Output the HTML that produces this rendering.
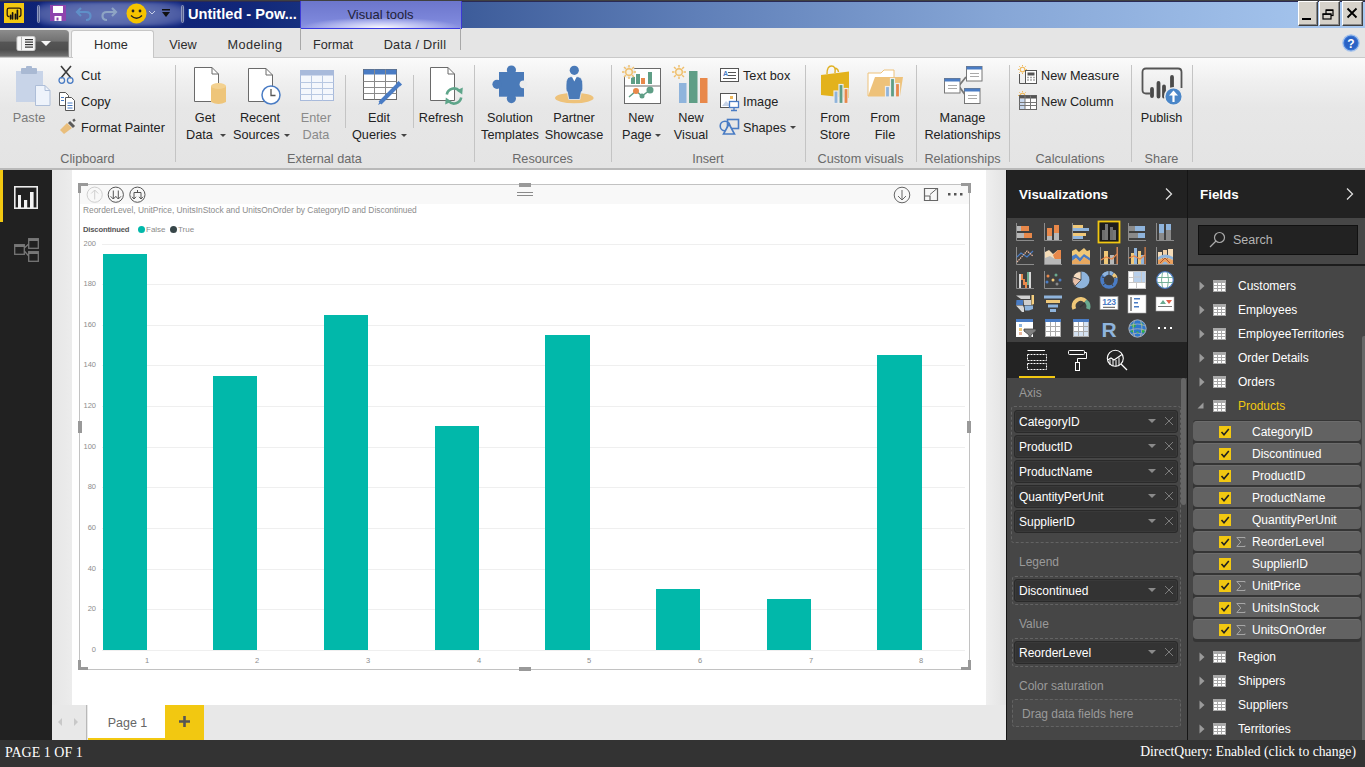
<!DOCTYPE html>
<html><head><meta charset="utf-8">
<style>
*{margin:0;padding:0;box-sizing:border-box}
html,body{width:1365px;height:767px;overflow:hidden;background:#e8e8e8;font-family:"Liberation Sans",sans-serif;position:relative}
.a{position:absolute}
.t{position:absolute;white-space:nowrap;line-height:1}
svg{position:absolute;overflow:visible}
</style></head><body>
<!-- TITLE BAR -->
<div class="a" style="left:0;top:0;width:1365px;height:28px;background:linear-gradient(90deg,#0d2275 0%,#112679 18%,#16307e 22%,#3d5c9a 33.8%,#5f7fb8 51%,#86a6d6 73%,#a8c8f0 100%)"></div>
<div class="a" style="left:0;top:0;width:1365px;height:1px;background:#404040"></div>
<div class="a" style="left:0;top:1px;width:1365px;height:1px;background:#2a2a55"></div>
<!-- app icon -->
<div class="a" style="left:4px;top:3px;width:20px;height:20px;background:#f2c811"></div>
<svg style="left:4px;top:3px" width="20" height="20"><path d="M5.5 13.6 H5 Q3.2 13.6 3.2 11.6 V7 Q3.2 5.2 5 5.2 H15 Q16.9 5.2 16.9 7 V11.6 Q16.9 13.6 15 13.6 H14.8" fill="none" stroke="#2a1a10" stroke-width="1.3"/><path d="M6.6 12.3 V15.8 M8.6 9.8 V15.8 M11.4 11.3 V15.8 M13.4 7.3 V15.8" stroke="#111" stroke-width="1.7" stroke-linecap="round"/><path d="M10 11 V16" stroke="#a08040" stroke-width="1"/></svg>
<!-- qat glow -->
<div class="a" style="left:38px;top:2px;width:146px;height:24px;border-radius:8px;background:radial-gradient(ellipse 60% 70% at 50% 50%,#6676b4 0%,#5a6aac 55%,#4a5aa2 80%,rgba(40,60,150,0.6) 100%);filter:blur(1.5px)"></div>
<div class="a" style="left:37px;top:5px;width:3px;height:18px;border-radius:2px;background:#56628f;border:1px solid #8c97bf"></div>
<div class="a" style="left:181px;top:5px;width:3px;height:18px;border-radius:2px;background:#56628f;border:1px solid #8c97bf"></div>
<!-- save -->
<svg style="left:50px;top:5px" width="16" height="16"><rect x="0" y="0" width="16" height="16" fill="#9b59b6"/><rect x="0" y="0" width="16" height="16" fill="#8e44ad"/><rect x="3" y="1" width="10" height="7" fill="#fff"/><rect x="4.5" y="11" width="7" height="5" fill="#fff"/><rect x="6.5" y="12.5" width="2" height="3" fill="#8e44ad"/></svg>
<!-- undo -->
<svg style="left:75px;top:5px" width="18" height="16"><path d="M6 3 L2 7 L6 11 M2.5 7 H11 Q15.5 7 15.5 11 Q15.5 15 11 15" fill="none" stroke="#5f8fc8" stroke-width="2.2"/></svg>
<!-- redo -->
<svg style="left:100px;top:5px" width="18" height="16"><path d="M12 3 L16 7 L12 11 M15.5 7 H7 Q2.5 7 2.5 11 Q2.5 15 7 15" fill="none" stroke="#8ea4c4" stroke-width="2.2"/></svg>
<!-- smiley -->
<svg style="left:126px;top:3px" width="21" height="21"><circle cx="10.5" cy="10.5" r="10" fill="#f5c400"/><circle cx="7" cy="8" r="1.4" fill="#222"/><circle cx="14" cy="8" r="1.4" fill="#222"/><path d="M5 12.5 Q10.5 18 16 12.5" fill="none" stroke="#222" stroke-width="1.3"/></svg>
<svg style="left:149px;top:11px" width="6" height="4"><path d="M0 0 L3 3 L6 0" fill="none" stroke="#c8d0e8" stroke-width="1"/></svg>
<svg style="left:162px;top:9px" width="8" height="9"><rect x="0" y="0" width="8" height="1.5" fill="#111"/><path d="M0 3 H8 L4 8 Z" fill="#111"/></svg>
<div class="t" style="left:188px;top:7px;font-size:14.6px;font-weight:bold;color:#fff">Untitled - Pow...</div>
<!-- visual tools -->
<div class="a" style="left:300px;top:1px;width:162px;height:28px;border:1px solid #3c3ad6;border-top:none;background:radial-gradient(ellipse 50% 40% at 50% 100%,#fafaff 0%,#c4c8f4 45%,rgba(130,138,222,0) 100%),linear-gradient(#6c76cc,#7c86da 70%,#8a92e2)"></div>
<div class="t" style="left:300px;top:8px;width:161px;text-align:center;font-size:13px;color:#222238">Visual tools</div>
<!-- window buttons -->
<div class="a" style="left:1298px;top:1px;width:20px;height:25px;background:#d6d2ca;border-top:1px solid #fff;border-left:1px solid #fff;border-right:1px solid #404040;border-bottom:1px solid #404040;box-shadow:inset -1px -1px 0 #8a8a8a"></div>
<div class="a" style="left:1319px;top:1px;width:21px;height:25px;background:#d6d2ca;border-top:1px solid #fff;border-left:1px solid #fff;border-right:1px solid #404040;border-bottom:1px solid #404040;box-shadow:inset -1px -1px 0 #8a8a8a"></div>
<div class="a" style="left:1342px;top:1px;width:21px;height:25px;background:#d6d2ca;border-top:1px solid #fff;border-left:1px solid #fff;border-right:1px solid #404040;border-bottom:1px solid #404040;box-shadow:inset -1px -1px 0 #8a8a8a"></div>
<div class="a" style="left:1302px;top:18px;width:9px;height:2px;background:#000"></div>
<svg style="left:1322px;top:9px" width="13" height="12"><rect x="4" y="1" width="7" height="5.5" fill="none" stroke="#000" stroke-width="1.2"/><rect x="4" y="0.6" width="7" height="1.4" fill="#000"/><rect x="1" y="5" width="8" height="5" fill="#d6d2ca" stroke="#000" stroke-width="1.2"/><rect x="0.6" y="4.5" width="8.8" height="1.4" fill="#000"/></svg>
<svg style="left:1346px;top:7px" width="12" height="12"><path d="M1.5 1.5 L10.5 10.5 M10.5 1.5 L1.5 10.5" stroke="#000" stroke-width="1.8"/></svg>

<!-- TAB ROW -->
<div class="a" style="left:0;top:28px;width:1365px;height:30px;background:#e5e5e5"></div>
<div class="a" style="left:300px;top:28px;width:162px;height:1px;background:#3a3ae0"></div>
<div class="a" style="left:0;top:30px;width:69px;height:27px;border-radius:0 4px 0 0;border:1px solid #8a8a8a;border-left:none;background:linear-gradient(#8a8a8a 0%,#727272 40%,#555 45%,#4e4e4e 75%,#707070 100%)"></div>
<svg style="left:16px;top:36px" width="36" height="15"><rect x="1" y="0.5" width="18" height="14" rx="1.5" fill="#f6f6f6" stroke="#d0d0d0"/><rect x="5" y="0.5" width="1" height="14" fill="#b8b8b8"/><rect x="9" y="3" width="8" height="1.2" fill="#333"/><rect x="9" y="5.5" width="8" height="1.2" fill="#333"/><rect x="9" y="8" width="8" height="1.2" fill="#333"/><rect x="9" y="10.5" width="8" height="1.2" fill="#333"/><path d="M25 5 H35 L30 10 Z" fill="#f6f6f6"/></svg>
<div class="a" style="left:71px;top:30px;width:83px;height:29px;background:#fafafa;border:1px solid #c6c6c6;border-bottom:none;border-radius:3px 3px 0 0"></div>
<div class="t" style="left:70px;top:39px;width:82px;text-align:center;font-size:12.7px;color:#2c2c2c">Home</div>
<div class="t" style="left:160px;top:39px;width:46px;text-align:center;font-size:12.7px;color:#2c2c2c">View</div>
<div class="t" style="left:215px;top:39px;width:80px;text-align:center;font-size:12.7px;letter-spacing:0.44px;color:#2c2c2c">Modeling</div>
<div class="t" style="left:300px;top:39px;width:66px;text-align:center;font-size:12.7px;color:#2c2c2c">Format</div>
<div class="t" style="left:370px;top:39px;width:90px;text-align:center;font-size:12.7px;letter-spacing:0.29px;color:#2c2c2c">Data / Drill</div>
<div class="a" style="left:300px;top:28px;width:1px;height:22px;background:#a8a8a8"></div>
<div class="a" style="left:460px;top:28px;width:1px;height:22px;background:#a8a8a8"></div>
<svg style="left:1342px;top:34px" width="18" height="18"><circle cx="9" cy="9" r="8.2" fill="#3a78d8" stroke="#a8c4ec" stroke-width="1.2"/><circle cx="9" cy="9" r="6.5" fill="#2b62c4"/><text x="9" y="13.5" font-family="Liberation Sans" font-weight="bold" font-size="12" fill="#fff" text-anchor="middle">?</text></svg>
<!-- RIBBON -->
<div class="a" style="left:0;top:57px;width:1365px;height:113px;background:linear-gradient(#fbfbfb 0%,#efefef 22%,#e7e7e7 45%,#e4e4e4 100%);border-top:1px solid #c9c9c9;border-bottom:2px solid #b9b9b9"></div>
<div class="a" style="left:73px;top:57px;width:80px;height:2px;background:#f9f9f9"></div>
<!-- separators -->
<div class="a" style="left:175px;top:65px;width:1px;height:97px;background:#c4c4c4"></div>
<div class="a" style="left:474px;top:65px;width:1px;height:97px;background:#c4c4c4"></div>
<div class="a" style="left:611px;top:65px;width:1px;height:97px;background:#c4c4c4"></div>
<div class="a" style="left:805px;top:65px;width:1px;height:97px;background:#c4c4c4"></div>
<div class="a" style="left:916px;top:65px;width:1px;height:97px;background:#c4c4c4"></div>
<div class="a" style="left:1009px;top:65px;width:1px;height:97px;background:#c4c4c4"></div>
<div class="a" style="left:1131px;top:65px;width:1px;height:97px;background:#c4c4c4"></div>
<div class="a" style="left:1192px;top:65px;width:1px;height:97px;background:#c4c4c4"></div>
<div class="a" style="left:345px;top:75px;width:1px;height:53px;background:#c4c4c4"></div>
<div class="a" style="left:413px;top:75px;width:1px;height:53px;background:#c4c4c4"></div>

<!-- group labels -->
<div class="t" style="left:0;top:153px;width:175px;text-align:center;font-size:12.7px;color:#6a6a6a">Clipboard</div>
<div class="t" style="left:175px;top:153px;width:299px;text-align:center;font-size:12.7px;color:#6a6a6a">External data</div>
<div class="t" style="left:474px;top:153px;width:137px;text-align:center;font-size:12.7px;color:#6a6a6a">Resources</div>
<div class="t" style="left:611px;top:153px;width:194px;text-align:center;font-size:12.7px;color:#6a6a6a">Insert</div>
<div class="t" style="left:805px;top:153px;width:111px;text-align:center;font-size:12.7px;color:#6a6a6a">Custom visuals</div>
<div class="t" style="left:916px;top:153px;width:93px;text-align:center;font-size:12.7px;color:#6a6a6a">Relationships</div>
<div class="t" style="left:1009px;top:153px;width:122px;text-align:center;font-size:12.7px;color:#6a6a6a">Calculations</div>
<div class="t" style="left:1131px;top:153px;width:61px;text-align:center;font-size:12.7px;color:#6a6a6a">Share</div>

<!-- Clipboard -->
<svg style="left:15px;top:66px" width="36" height="40">
 <rect x="1" y="5" width="27" height="31" fill="#c8d4e8"/>
 <rect x="6" y="2" width="16" height="6" rx="1" fill="#a9b9d3"/>
 <rect x="11" y="0" width="6" height="4" rx="1" fill="#a9b9d3"/>
 <path d="M20.5 19.5 H30 L35 24.5 V39.5 H20.5 Z" fill="#eef3fb" stroke="#aebed8"/>
 <path d="M30 19.5 V24.5 H35" fill="none" stroke="#aebed8"/>
</svg>
<div class="t" style="left:0;top:112px;width:58px;text-align:center;font-size:12.7px;color:#7a7a7a">Paste</div>
<svg style="left:58px;top:66px" width="18" height="19">
 <path d="M3 0 L13 12 M13 0 L3 12" stroke="#3c3c3c" stroke-width="1.6"/>
 <circle cx="3.8" cy="14.5" r="2.8" fill="none" stroke="#4a7cc4" stroke-width="1.3"/>
 <circle cx="12.2" cy="14.5" r="2.8" fill="none" stroke="#4a7cc4" stroke-width="1.3"/>
</svg>
<div class="t" style="left:81px;top:70px;font-size:12.7px;color:#222">Cut</div>
<svg style="left:58px;top:92px" width="19" height="19">
 <path d="M1.5 0.5 H7.5 L10.5 3.5 V13.5 H1.5 Z" fill="#fff" stroke="#555"/>
 <path d="M7.5 5.5 H13.5 L16.5 8.5 V18.5 H7.5 Z" fill="#fff" stroke="#555"/>
 <path d="M3 5.5 H6 M3 8.5 H6 M9.5 11 H14.5 M9.5 13.5 H14.5 M9.5 16 H14.5" stroke="#4a7cc4" stroke-width="1"/>
</svg>
<div class="t" style="left:81px;top:96px;font-size:12.7px;color:#222">Copy</div>
<svg style="left:59px;top:119px" width="18" height="16">
 <path d="M10 3 L15 8" stroke="#5a5a5a" stroke-width="3"/>
 <path d="M14 2 L16 0.5" stroke="#5a5a5a" stroke-width="2.5"/>
 <path d="M1 11 L8 4 L13 9 L5 15 Z" fill="#e9be7c"/>
</svg>
<div class="t" style="left:81px;top:122px;font-size:12.7px;color:#222">Format Painter</div>

<!-- External data -->
<svg style="left:193px;top:66px" width="36" height="40">
 <path d="M1.5 1.5 H19 L25.5 8 V35.5 H1.5 Z" fill="#fff" stroke="#6a6a6a"/>
 <path d="M19 1.5 V8 H25.5" fill="none" stroke="#6a6a6a"/>
 <path d="M18 20 V36 Q25.5 40 33 36 V20 Z" fill="#eec57a"/>
 <ellipse cx="25.5" cy="20" rx="7.5" ry="3" fill="#f3d190"/>
</svg>
<div class="t" style="left:175px;top:112px;width:60px;text-align:center;font-size:12.7px;color:#222">Get</div>
<div class="t" style="left:186px;top:129px;font-size:12.7px;color:#222">Data</div>
<svg style="left:220px;top:134px" width="6" height="4"><path d="M0 0 H6 L3 3 Z" fill="#444"/></svg>
<svg style="left:247px;top:67px" width="36" height="40">
 <path d="M1.5 1.5 H19 L25.5 8 V34.5 H1.5 Z" fill="#fff" stroke="#6a6a6a"/>
 <path d="M19 1.5 V8 H25.5" fill="none" stroke="#6a6a6a"/>
 <circle cx="24" cy="28" r="9" fill="#fff" stroke="#4a7cc4" stroke-width="1.5"/>
 <path d="M24 22 V28.5 H28.5" fill="none" stroke="#555" stroke-width="1.3"/>
</svg>
<div class="t" style="left:230px;top:112px;width:60px;text-align:center;font-size:12.7px;color:#222">Recent</div>
<div class="t" style="left:233px;top:129px;font-size:12.7px;color:#222">Sources</div>
<svg style="left:284px;top:134px" width="6" height="4"><path d="M0 0 H6 L3 3 Z" fill="#444"/></svg>
<svg style="left:299px;top:69px" width="36" height="33">
 <rect x="1.5" y="1.5" width="33" height="30" fill="#f4f7fc" stroke="#a8badb"/>
 <rect x="1.5" y="1.5" width="33" height="5" fill="#a8badb"/>
 <path d="M1.5 13.5 H34.5 M1.5 19.5 H34.5 M1.5 25.5 H34.5 M12.5 6.5 V31.5 M23.5 6.5 V31.5" stroke="#b8c8e2"/>
</svg>
<div class="t" style="left:286px;top:112px;width:60px;text-align:center;font-size:12.7px;color:#8a8a8a">Enter</div>
<div class="t" style="left:286px;top:129px;width:60px;text-align:center;font-size:12.7px;color:#8a8a8a">Data</div>
<svg style="left:362px;top:68px" width="42" height="38">
 <rect x="1.5" y="1.5" width="33" height="30" fill="#fff" stroke="#6a6a6a"/>
 <rect x="1.5" y="1.5" width="33" height="5" fill="#4a7cc4"/>
 <path d="M1.5 13.5 H34.5 M1.5 19.5 H34.5 M1.5 25.5 H34.5 M12.5 1.5 V31.5 M23.5 1.5 V31.5" stroke="#8a8a8a"/>
 <path d="M18 35 L37 16" stroke="#4a7cc4" stroke-width="4"/>
 <path d="M16 37 L18.5 32 L21 34.5 Z" fill="#4a7cc4"/>
 <path d="M35.5 14 L39 17.5" stroke="#4a7cc4" stroke-width="3"/>
</svg>
<div class="t" style="left:349px;top:112px;width:60px;text-align:center;font-size:12.7px;color:#222">Edit</div>
<div class="t" style="left:352px;top:129px;font-size:12.7px;color:#222">Queries</div>
<svg style="left:401px;top:134px" width="6" height="4"><path d="M0 0 H6 L3 3 Z" fill="#444"/></svg>
<svg style="left:429px;top:66px" width="36" height="40">
 <path d="M1.5 1.5 H19 L25.5 8 V34.5 H1.5 Z" fill="#fff" stroke="#6a6a6a"/>
 <path d="M19 1.5 V8 H25.5" fill="none" stroke="#6a6a6a"/>

 <path d="M17.8 28.5 A7.3 7.3 0 0 1 30.5 25" fill="none" stroke="#5ea58a" stroke-width="2.6"/>
 <path d="M32.2 31.5 A7.3 7.3 0 0 1 19.5 35" fill="none" stroke="#5ea58a" stroke-width="2.6"/>
 <path d="M27.5 24.5 L33.8 21.5 L33.2 28.5 Z" fill="#5ea58a"/>
 <path d="M22.5 35.5 L16.2 38.5 L16.8 31.5 Z" fill="#5ea58a"/>
</svg>
<div class="t" style="left:411px;top:112px;width:60px;text-align:center;font-size:12.7px;color:#222">Refresh</div>

<!-- Resources -->
<svg style="left:492px;top:64px" width="36" height="42">
 <rect x="7" y="8" width="25" height="24.7" fill="#4a7ab8"/>
 <circle cx="19.4" cy="6" r="4.6" fill="#4a7ab8"/><rect x="17" y="6" width="5" height="3" fill="#4a7ab8"/>
 <circle cx="5" cy="20.3" r="4.6" fill="#4a7ab8"/><rect x="5" y="18" width="3" height="5" fill="#4a7ab8"/>
 <circle cx="19.4" cy="34.6" r="4.6" fill="#4a7ab8"/>
 <circle cx="31.5" cy="20.3" r="3.9" fill="#ececec"/>
</svg>
<div class="t" style="left:474px;top:112px;width:72px;text-align:center;font-size:12.7px;color:#222">Solution</div>
<div class="t" style="left:474px;top:129px;width:72px;text-align:center;font-size:12.7px;color:#222">Templates</div>
<svg style="left:554px;top:65px" width="42" height="41">
 <ellipse cx="20.3" cy="33" rx="19.3" ry="5.2" fill="#eec27a"/>
 <circle cx="20.3" cy="5.3" r="4.6" fill="#4a7ab8"/>
 <path d="M12 20 Q12 12 16.5 11.7 H24 Q28.8 12 28.8 20 V24 Q28.8 26 27.3 27 L25.8 34.5 H14.8 L13.3 27 Q12 26 12 24 Z" fill="#4a7ab8" stroke="#f0f0f0" stroke-width="0.8"/>
 <path d="M17.8 11.6 L20.3 16.5 L22.8 11.6 Z" fill="#fff"/>
</svg>
<div class="t" style="left:540px;top:112px;width:68px;text-align:center;font-size:12.7px;color:#222">Partner</div>
<div class="t" style="left:540px;top:129px;width:68px;text-align:center;font-size:12.7px;color:#222">Showcase</div>

<!-- Insert -->
<svg style="left:620px;top:63px" width="42" height="42">
 <rect x="4.5" y="5.5" width="36" height="35" fill="#fff" stroke="#6a6a6a"/>
 <path d="M4.5 23 H40.5" stroke="#6a6a6a"/>
 <rect x="11" y="14" width="4" height="7" fill="#5f9e86"/>
 <rect x="16" y="11" width="4" height="10" fill="#5f9e86"/>
 <rect x="21" y="15" width="4" height="6" fill="#e8884a"/>
 <rect x="28" y="9" width="4" height="12" fill="#5f9e86"/>
 <path d="M9 34 L16 28 L22 33 L30 27" fill="none" stroke="#5f9e86" stroke-width="1.5"/>
 <circle cx="16" cy="28" r="3" fill="#e8884a"/><circle cx="22" cy="33" r="2.5" fill="#5f9e86"/><circle cx="30" cy="27" r="3.5" fill="#5f9e86"/>
 <circle cx="9" cy="9" r="6.5" fill="#eeeeee"/>
 <circle cx="9" cy="9" r="3.3" fill="#f6f0e0" stroke="#efbe6a" stroke-width="1.4"/>
 <path d="M9 2 V4.5 M9 13.5 V16 M2 9 H4.5 M13.5 9 H16 M4 4 L5.8 5.8 M12.2 12.2 L14 14 M4 14 L5.8 12.2 M12.2 5.8 L14 4" stroke="#efbe6a" stroke-width="1.4"/>
</svg>
<div class="t" style="left:611px;top:112px;width:60px;text-align:center;font-size:12.7px;color:#222">New</div>
<div class="t" style="left:622px;top:129px;font-size:12.7px;color:#222">Page</div>
<svg style="left:655px;top:134px" width="6" height="4"><path d="M0 0 H6 L3 3 Z" fill="#444"/></svg>
<svg style="left:670px;top:63px" width="40" height="42">
 <rect x="9" y="20" width="7.5" height="20" fill="#8fb4dc"/>
 <rect x="19" y="8" width="8.5" height="32" fill="#5f9e86"/>
 <rect x="30" y="15" width="7.5" height="25" fill="#e8884a"/>
 <circle cx="9" cy="9" r="3.3" fill="#f6f0e0" stroke="#efbe6a" stroke-width="1.4"/>
 <path d="M9 2 V4.5 M9 13.5 V16 M2 9 H4.5 M13.5 9 H16 M4 4 L5.8 5.8 M12.2 12.2 L14 14 M4 14 L5.8 12.2 M12.2 5.8 L14 4" stroke="#efbe6a" stroke-width="1.4"/>
</svg>
<div class="t" style="left:661px;top:112px;width:60px;text-align:center;font-size:12.7px;color:#222">New</div>
<div class="t" style="left:661px;top:129px;width:60px;text-align:center;font-size:12.7px;color:#222">Visual</div>
<svg style="left:719px;top:67px" width="22" height="17">
 <rect x="1.5" y="1.5" width="18" height="13" fill="#fff" stroke="#555"/>
 <text x="4" y="9" font-family="Liberation Sans" font-size="7" font-weight="bold" fill="#4a7cc4">A</text>
 <path d="M9 5.5 H17 M9 8.5 H17 M4 11.5 H17" stroke="#555" stroke-width="1"/>
</svg>
<div class="t" style="left:743px;top:70px;font-size:12.7px;color:#222">Text box</div>
<svg style="left:719px;top:92px" width="22" height="20">
 <rect x="1.5" y="1.5" width="16" height="14" fill="#fff" stroke="#555"/>
 <path d="M3 14 L7 9 L10 12 V14 Z" fill="#c8d4e8"/>
 <rect x="11" y="4" width="3" height="3" fill="#efb85a"/>
 <rect x="10.5" y="9.5" width="9" height="6" fill="#fff" stroke="#4a7cc4" stroke-width="1.3"/>
 <path d="M15 15.5 V18.5 M12 18.5 H18" stroke="#4a7cc4" stroke-width="1.3"/>
</svg>
<div class="t" style="left:743px;top:96px;font-size:12.7px;color:#222">Image</div>
<svg style="left:719px;top:118px" width="22" height="18">
 <circle cx="6" cy="8" r="4.8" fill="none" stroke="#4a7cc4" stroke-width="1.6"/>
 <rect x="8.5" y="1.5" width="11" height="9" fill="none" stroke="#4a7cc4" stroke-width="1.6"/>
 <path d="M10 6 L15.5 16 H4.5 Z" fill="#e6e6e6" stroke="#4a7cc4" stroke-width="1.6"/>
</svg>
<div class="t" style="left:743px;top:122px;font-size:12.7px;color:#222">Shapes</div>
<svg style="left:790px;top:126px" width="6" height="4"><path d="M0 0 H6 L3 3 Z" fill="#444"/></svg>

<!-- Custom visuals -->
<svg style="left:818px;top:65px" width="38" height="40">
 <path d="M9 9 Q9 1 13.5 1 Q18 1 17 8 M16 3 Q20 3 20.5 7" fill="none" stroke="#e0b020" stroke-width="1.4"/>
 <path d="M3 10 L31 6.5 V33 L3 30 Z" fill="#e3b21c"/>
 <g stroke="#ececec" stroke-width="1.2"><rect x="16" y="26" width="4" height="12.5" fill="#8fb4dc"/><rect x="21" y="19.5" width="4" height="19" fill="#5f9e86"/><rect x="26" y="23.5" width="4" height="15" fill="#e8884a"/></g>
</svg>
<div class="t" style="left:805px;top:112px;width:60px;text-align:center;font-size:12.7px;color:#222">From</div>
<div class="t" style="left:805px;top:129px;width:60px;text-align:center;font-size:12.7px;color:#222">Store</div>
<svg style="left:866px;top:66px" width="38" height="36">
 <path d="M2 7 H15 L18 4 H28 V30 H2 Z" fill="#fff" stroke="#eec27a"/>
 <path d="M9 11 H37 L34 30 H2 Z" fill="#eec27a"/>
 <g stroke="#ececec" stroke-width="1.2"><rect x="19.5" y="20.5" width="4" height="10.5" fill="#8fb4dc"/><rect x="24.5" y="12.5" width="4" height="18.5" fill="#5f9e86"/><rect x="29.5" y="17.5" width="4" height="13.5" fill="#e8884a"/></g>
</svg>
<div class="t" style="left:855px;top:112px;width:60px;text-align:center;font-size:12.7px;color:#222">From</div>
<div class="t" style="left:855px;top:129px;width:60px;text-align:center;font-size:12.7px;color:#222">File</div>

<!-- Relationships -->
<svg style="left:942px;top:65px" width="42" height="42">
 <path d="M17.5 20 L24 12 M17.5 22 L22.5 29" stroke="#777" stroke-width="1.8" fill="none"/>
 <rect x="24.5" y="1.5" width="15.5" height="14.5" fill="#fff" stroke="#777"/><rect x="24.5" y="1.5" width="15.5" height="3" fill="#4a7cc4"/>
 <path d="M28 8.5 H37 M28 11.5 H37" stroke="#aaa"/>
 <rect x="2.5" y="13.5" width="15.5" height="14.5" fill="#fff" stroke="#777"/><rect x="2.5" y="13.5" width="15.5" height="3" fill="#4a7cc4"/>
 <path d="M6 20.5 H15 M6 23.5 H15" stroke="#aaa"/>
 <rect x="22.5" y="23.5" width="15.5" height="15" fill="#fff" stroke="#777"/><rect x="22.5" y="23.5" width="15.5" height="3" fill="#4a7cc4"/>
 <path d="M26 30.5 H35 M26 33.5 H35" stroke="#aaa"/>
</svg>
<div class="t" style="left:916px;top:112px;width:93px;text-align:center;font-size:12.7px;color:#222">Manage</div>
<div class="t" style="left:916px;top:129px;width:93px;text-align:center;font-size:12.7px;color:#222">Relationships</div>

<!-- Calculations -->
<svg style="left:1018px;top:65px" width="22" height="20">
 <circle cx="4.5" cy="4.5" r="2.3" fill="none" stroke="#efb85a" stroke-width="1.1"/>
 <path d="M4.5 0 V1.3 M4.5 7.7 V9 M0 4.5 H1.3 M7.7 4.5 H9 M1.3 1.3 L2.2 2.2 M6.8 6.8 L7.7 7.7 M1.3 7.7 L2.2 6.8 M6.8 2.2 L7.7 1.3" stroke="#efb85a" stroke-width="1"/>
 <path d="M1.5 9 V18.5 H9" fill="none" stroke="#555"/>
 <rect x="7.5" y="5.5" width="11" height="13" fill="#fff" stroke="#555"/>
 <rect x="9.5" y="7.5" width="7" height="3" fill="#555"/>
 <path d="M9.5 12.5 H10.5 M12.5 12.5 H13.5 M15.5 12.5 H16.5 M9.5 15 H10.5 M12.5 15 H13.5 M15.5 15 H16.5" stroke="#555" stroke-width="1.6"/>
</svg>
<div class="t" style="left:1041px;top:70px;font-size:12.7px;color:#222">New Measure</div>
<svg style="left:1018px;top:91px" width="22" height="20">
 <circle cx="4.5" cy="4.5" r="2.3" fill="none" stroke="#efb85a" stroke-width="1.1"/>
 <path d="M4.5 0 V1.3 M4.5 7.7 V9 M0 4.5 H1.3 M7.7 4.5 H9 M1.3 1.3 L2.2 2.2 M6.8 6.8 L7.7 7.7 M1.3 7.7 L2.2 6.8 M6.8 2.2 L7.7 1.3" stroke="#efb85a" stroke-width="1"/>
 <rect x="1.5" y="4.5" width="17" height="14" fill="#fff" stroke="#666"/>
 <rect x="1.5" y="4.5" width="17" height="3" fill="#555"/>
 <rect x="2" y="8" width="5" height="10" fill="#c8d8ee"/>
 <path d="M1.5 11.5 H18.5 M1.5 14.5 H18.5 M7 4.5 V18.5 M12.5 4.5 V18.5" stroke="#777"/>
</svg>
<div class="t" style="left:1041px;top:96px;font-size:12.7px;color:#222">New Column</div>

<!-- Share -->
<svg style="left:1141px;top:67px" width="44" height="40">
 <path d="M9 26.5 H5 Q1.5 26.5 1.5 23 V5 Q1.5 1.5 5 1.5 H37 Q40.5 1.5 40.5 5 V21" fill="none" stroke="#555" stroke-width="1.8"/>
 <path d="M11 22 V29 M17.5 16 V29.5 M23 19.5 V29.5 M31 10 V27" stroke="#4a4a4a" stroke-width="3.8" stroke-linecap="round"/>
 <circle cx="32.5" cy="29.5" r="8.8" fill="#4a86c8" stroke="#ececec" stroke-width="1.5"/>
 <path d="M32.5 35 V25" stroke="#fff" stroke-width="2.2"/><path d="M28 28.5 L32.5 23.5 L37 28.5 Z" fill="#fff"/>
</svg>
<div class="t" style="left:1131px;top:112px;width:61px;text-align:center;font-size:12.7px;color:#222">Publish</div>
<!-- LEFT NAV -->
<div class="a" style="left:0;top:170px;width:52px;height:570px;background:#212121"></div>
<div class="a" style="left:0;top:170px;width:3px;height:52px;background:#f2c811"></div>
<svg style="left:14px;top:186px" width="24" height="23"><rect x="0.8" y="0.8" width="22.4" height="21.4" fill="none" stroke="#ececec" stroke-width="1.6"/><rect x="4" y="9" width="3" height="13" fill="#f4f4f4"/><rect x="10" y="14" width="3.2" height="8" fill="#f4f4f4"/><rect x="16" y="6" width="3.6" height="16" fill="#f4f4f4"/></svg>
<svg style="left:14px;top:238px" width="25" height="24"><g fill="none" stroke="#777" stroke-width="1.3"><rect x="0.7" y="6.7" width="9.6" height="9.6"/><rect x="14.7" y="0.7" width="9.6" height="9.6"/><rect x="14.7" y="13.7" width="9.6" height="9.6"/><path d="M10.3 10 L14.7 6 M10.3 13 L14.7 18"/></g><rect x="0.7" y="6.7" width="9.6" height="2.3" fill="#777"/><rect x="14.7" y="0.7" width="9.6" height="2.3" fill="#777"/><rect x="14.7" y="13.7" width="9.6" height="2.3" fill="#777"/></svg>
<!-- CANVAS -->
<div class="a" style="left:52px;top:170px;width:955px;height:570px;background:#e9e9e9"></div>
<div class="a" style="left:52px;top:170px;width:20px;height:535px;background:linear-gradient(90deg,#e6e6e6,#ececec)"></div>
<div class="a" style="left:986px;top:170px;width:20px;height:535px;background:linear-gradient(90deg,#efefef,#e3e3e3)"></div>
<div class="a" style="left:72px;top:170px;width:914px;height:535px;background:#fff"></div>
<div class="a" style="left:80px;top:185px;width:889px;height:19px;background:#f8f8f8"></div>
<div class="a" style="left:79px;top:184px;width:891px;height:486px;border:1px solid #c2c2c2"></div>
<div class="a" style="left:78px;top:183px;width:10px;height:3px;background:#999"></div>
<div class="a" style="left:78px;top:183px;width:3px;height:10px;background:#999"></div>
<div class="a" style="left:961px;top:183px;width:10px;height:3px;background:#999"></div>
<div class="a" style="left:968px;top:183px;width:3px;height:10px;background:#999"></div>
<div class="a" style="left:78px;top:667px;width:10px;height:3px;background:#999"></div>
<div class="a" style="left:78px;top:660px;width:3px;height:10px;background:#999"></div>
<div class="a" style="left:961px;top:667px;width:10px;height:3px;background:#999"></div>
<div class="a" style="left:968px;top:660px;width:3px;height:10px;background:#999"></div>
<div class="a" style="left:519px;top:183px;width:12px;height:4px;background:#999"></div>
<div class="a" style="left:519px;top:667px;width:12px;height:4px;background:#999"></div>
<div class="a" style="left:78px;top:421px;width:4px;height:12px;background:#999"></div>
<div class="a" style="left:967px;top:421px;width:4px;height:12px;background:#999"></div>
<div class="a" style="left:517px;top:192px;width:16px;height:1px;background:#8a8a8a"></div>
<div class="a" style="left:517px;top:195px;width:16px;height:1px;background:#8a8a8a"></div>
<svg style="left:86px;top:186px" width="60" height="18">
<circle cx="8.7" cy="8.7" r="7.6" fill="none" stroke="#cfcfcf" stroke-width="1"/><path d="M8.7 4 V13.5 M5.2 7.5 L8.7 4 L12.2 7.5" fill="none" stroke="#cfcfcf" stroke-width="1"/>
<circle cx="29.8" cy="8.7" r="7.6" fill="none" stroke="#555" stroke-width="1"/><path d="M27.3 4.5 V13 M24.6 10.3 L27.3 13 L30 10.3 M32.3 4.5 V13 M29.6 10.3 L32.3 13 L35 10.3" fill="none" stroke="#555" stroke-width="1"/>
<circle cx="51.4" cy="8.7" r="7.6" fill="none" stroke="#555" stroke-width="1"/><path d="M48 13 V6.5 H55 V13 M46 10.8 L48 13 L50 10.8 M53 10.8 L55 13 L57 10.8 M51.5 4 V6.5" fill="none" stroke="#555" stroke-width="1"/>
</svg>
<svg style="left:893px;top:186px" width="75" height="18">
<circle cx="9" cy="9" r="7.8" fill="none" stroke="#666" stroke-width="1"/><path d="M9 4 V14 M5 10 L9 14 L13 10" fill="none" stroke="#666" stroke-width="1"/>
<path d="M31.5 2.5 H44.5 V14.5 H31.5 Z M31.5 10 H37 V14.5" fill="none" stroke="#666" stroke-width="1.2"/><path d="M37 8.5 L44 2.5 M40 2.5 H44.5 V7" fill="none" stroke="#666" stroke-width="1"/>
<rect x="55" y="7" width="2.5" height="2.5" fill="#555"/><rect x="61" y="7" width="2.5" height="2.5" fill="#555"/><rect x="67" y="7" width="2.5" height="2.5" fill="#555"/>
</svg>
<div class="t" style="left:83px;top:206px;font-size:8.4px;color:#8c8c8c">ReorderLevel, UnitPrice, UnitsInStock and UnitsOnOrder by CategoryID and Discontinued</div>
<div class="t" style="left:83px;top:226px;font-size:7.6px;font-weight:bold;color:#555;letter-spacing:-0.15px">Discontinued</div>
<div class="a" style="left:138px;top:226px;width:7px;height:7px;border-radius:50%;background:#01b8aa"></div>
<div class="t" style="left:146px;top:226px;font-size:8px;color:#8c8c8c">False</div>
<div class="a" style="left:170px;top:226px;width:7px;height:7px;border-radius:50%;background:#374649"></div>
<div class="t" style="left:178px;top:226px;font-size:8px;color:#8c8c8c">True</div>
<div class="a" style="left:102px;top:650px;width:863px;height:1px;background:#efefef"></div>
<div class="t" style="left:72px;top:646px;width:24px;text-align:right;font-size:7.5px;color:#8c8c8c">0</div>
<div class="a" style="left:102px;top:609px;width:863px;height:1px;background:#efefef"></div>
<div class="t" style="left:72px;top:605px;width:24px;text-align:right;font-size:7.5px;color:#8c8c8c">20</div>
<div class="a" style="left:102px;top:569px;width:863px;height:1px;background:#efefef"></div>
<div class="t" style="left:72px;top:565px;width:24px;text-align:right;font-size:7.5px;color:#8c8c8c">40</div>
<div class="a" style="left:102px;top:528px;width:863px;height:1px;background:#efefef"></div>
<div class="t" style="left:72px;top:524px;width:24px;text-align:right;font-size:7.5px;color:#8c8c8c">60</div>
<div class="a" style="left:102px;top:487px;width:863px;height:1px;background:#efefef"></div>
<div class="t" style="left:72px;top:483px;width:24px;text-align:right;font-size:7.5px;color:#8c8c8c">80</div>
<div class="a" style="left:102px;top:447px;width:863px;height:1px;background:#efefef"></div>
<div class="t" style="left:72px;top:443px;width:24px;text-align:right;font-size:7.5px;color:#8c8c8c">100</div>
<div class="a" style="left:102px;top:406px;width:863px;height:1px;background:#efefef"></div>
<div class="t" style="left:72px;top:402px;width:24px;text-align:right;font-size:7.5px;color:#8c8c8c">120</div>
<div class="a" style="left:102px;top:365px;width:863px;height:1px;background:#efefef"></div>
<div class="t" style="left:72px;top:361px;width:24px;text-align:right;font-size:7.5px;color:#8c8c8c">140</div>
<div class="a" style="left:102px;top:325px;width:863px;height:1px;background:#efefef"></div>
<div class="t" style="left:72px;top:321px;width:24px;text-align:right;font-size:7.5px;color:#8c8c8c">160</div>
<div class="a" style="left:102px;top:284px;width:863px;height:1px;background:#efefef"></div>
<div class="t" style="left:72px;top:280px;width:24px;text-align:right;font-size:7.5px;color:#8c8c8c">180</div>
<div class="a" style="left:102px;top:244px;width:863px;height:1px;background:#efefef"></div>
<div class="t" style="left:72px;top:240px;width:24px;text-align:right;font-size:7.5px;color:#8c8c8c">200</div>
<div class="a" style="left:103px;top:254px;width:44px;height:396px;background:#01b8aa"></div>
<div class="t" style="left:127px;top:657px;width:40px;text-align:center;font-size:7.5px;color:#8c8c8c">1</div>
<div class="a" style="left:213px;top:376px;width:44px;height:274px;background:#01b8aa"></div>
<div class="t" style="left:237px;top:657px;width:40px;text-align:center;font-size:7.5px;color:#8c8c8c">2</div>
<div class="a" style="left:324px;top:315px;width:44px;height:335px;background:#01b8aa"></div>
<div class="t" style="left:348px;top:657px;width:40px;text-align:center;font-size:7.5px;color:#8c8c8c">3</div>
<div class="a" style="left:435px;top:426px;width:44px;height:224px;background:#01b8aa"></div>
<div class="t" style="left:459px;top:657px;width:40px;text-align:center;font-size:7.5px;color:#8c8c8c">4</div>
<div class="a" style="left:545px;top:335px;width:45px;height:315px;background:#01b8aa"></div>
<div class="t" style="left:569px;top:657px;width:40px;text-align:center;font-size:7.5px;color:#8c8c8c">5</div>
<div class="a" style="left:656px;top:589px;width:44px;height:61px;background:#01b8aa"></div>
<div class="t" style="left:680px;top:657px;width:40px;text-align:center;font-size:7.5px;color:#8c8c8c">6</div>
<div class="a" style="left:767px;top:599px;width:44px;height:51px;background:#01b8aa"></div>
<div class="t" style="left:791px;top:657px;width:40px;text-align:center;font-size:7.5px;color:#8c8c8c">7</div>
<div class="a" style="left:877px;top:355px;width:45px;height:295px;background:#01b8aa"></div>
<div class="t" style="left:901px;top:657px;width:40px;text-align:center;font-size:7.5px;color:#8c8c8c">8</div>
<!-- PAGE TABS -->
<div class="a" style="left:52px;top:705px;width:954px;height:35px;background:#e8e8e8"></div>
<div class="a" style="left:86px;top:705px;width:1px;height:35px;background:#b8b8b8"></div>
<svg style="left:58px;top:718px" width="24" height="8"><path d="M4 0 L0 4 L4 8 Z" fill="#c8c8c8"/><path d="M16 0 L20 4 L16 8 Z" fill="#c8c8c8"/></svg>
<div class="a" style="left:88px;top:705px;width:77px;height:35px;background:#fff;border-bottom:2px solid #f2c811"></div>
<div class="t" style="left:89px;top:717px;width:77px;text-align:center;font-size:12.5px;color:#666">Page 1</div>
<div class="a" style="left:165px;top:705px;width:39px;height:35px;background:#f2c811"></div>
<svg style="left:178px;top:715px" width="13" height="13"><path d="M6.5 1 V12 M1 6.5 H12" stroke="#555" stroke-width="2.6"/></svg><!-- VIS PANE -->
<div class="a" style="left:1006px;top:170px;width:1px;height:570px;background:#151515"></div>
<div class="a" style="left:1007px;top:170px;width:180px;height:48px;background:#222"></div>
<div class="t" style="left:1019px;top:188px;font-size:13.4px;font-weight:bold;color:#fff">Visualizations</div>
<svg style="left:1164px;top:187px" width="10" height="14"><path d="M2 1.5 L7.5 7 L2 12.5" fill="none" stroke="#ddd" stroke-width="1.3"/></svg>
<div class="a" style="left:1007px;top:218px;width:180px;height:124px;background:#404040"></div>
<div class="a" style="left:1007px;top:342px;width:180px;height:36px;background:#232323"></div>
<div class="a" style="left:1007px;top:378px;width:180px;height:362px;background:#464646"></div>

<!-- icon grid -->
<svg style="left:1016px;top:223px" width="160" height="120">
 <defs></defs>
 <g id="r1">
  <!-- 1 stacked bar -->
  <g transform="translate(0,0)"><path d="M0.5 0 V17.5 H18" fill="none" stroke="#8c8c8c"/><rect x="1" y="3" width="4" height="5" fill="#b8b8b8"/><rect x="5" y="3" width="8" height="5" fill="#e8884a"/><rect x="1" y="10" width="7" height="5" fill="#b8b8b8"/><rect x="8" y="10" width="8" height="5" fill="#e8884a"/></g>
  <!-- 2 stacked column -->
  <g transform="translate(28,0)"><path d="M0.5 0 V17.5 H18" fill="none" stroke="#8c8c8c"/><rect x="3" y="5" width="5" height="8" fill="#e8884a"/><rect x="3" y="13" width="5" height="4" fill="#b8b8b8"/><rect x="10" y="2" width="5" height="8" fill="#e8884a"/><rect x="10" y="10" width="5" height="7" fill="#b8b8b8"/></g>
  <!-- 3 clustered bar -->
  <g transform="translate(56,0)"><path d="M0.5 0 V17.5 H18" fill="none" stroke="#8c8c8c"/><rect x="1" y="2" width="10" height="3" fill="#f0c878"/><rect x="1" y="5" width="16" height="3" fill="#8fb4dc"/><rect x="1" y="10" width="13" height="3" fill="#f0c878"/><rect x="1" y="13" width="10" height="3" fill="#8fb4dc"/></g>
  <!-- 4 clustered column selected -->
  <g transform="translate(84,0)"><rect x="-1.5" y="-1.5" width="21" height="21" fill="#1c1c1c" stroke="#f2c811" stroke-width="1.8"/><rect x="2" y="7" width="3" height="10" fill="#6e6e6e"/><rect x="5" y="1" width="3" height="16" fill="#777"/><rect x="10" y="4" width="3" height="13" fill="#6e6e6e"/><rect x="13" y="7" width="3" height="10" fill="#777"/></g>
  <!-- 5 100% bar -->
  <g transform="translate(112,0)"><path d="M0.5 0 V17.5 H18" fill="none" stroke="#8c8c8c"/><rect x="1" y="3" width="6" height="5" fill="#8a8a8a"/><rect x="7" y="3" width="10" height="5" fill="#8fb4dc"/><rect x="1" y="10" width="9" height="5" fill="#8a8a8a"/><rect x="10" y="10" width="7" height="5" fill="#8fb4dc"/></g>
  <!-- 6 100% column -->
  <g transform="translate(140,0)"><path d="M0.5 0 V17.5 H18" fill="none" stroke="#8c8c8c"/><rect x="3" y="1" width="5" height="9" fill="#8fb4dc"/><rect x="3" y="10" width="5" height="7" fill="#8a8a8a"/><rect x="10" y="1" width="5" height="6" fill="#8fb4dc"/><rect x="10" y="7" width="5" height="10" fill="#8a8a8a"/></g>
 </g>
 <g transform="translate(0,24)">
  <g><path d="M0.5 0 V17.5 H18" fill="none" stroke="#8c8c8c"/><path d="M1 10 L5 6 L11 10 L17 4" fill="none" stroke="#4a7cc4" stroke-width="1.2"/><path d="M1 15 L11 4 L17 9" fill="none" stroke="#e9b8a0" stroke-width="1.2" stroke-dasharray="1.5 .8"/></g>
  <g transform="translate(28,0)"><path d="M0.5 0 V17.5 H18" fill="none" stroke="#8c8c8c"/><path d="M1 5 L5 3 L9 7 L14 3 L17 3 V17 H1 Z" fill="#f5dcb8"/><path d="M9 8 L14 3 L17 3 V12 L11 13 Z" fill="#e8884a"/><path d="M1 11 L6 9 L11 12 L17 12 V17 H1 Z" fill="#b8b8b8"/></g>
  <g transform="translate(56,0)"><rect x="0" y="17" width="18" height="1" fill="#8c8c8c"/><path d="M0 4 L4 2 L7 5 L12 1 L15 4 L18 3 V17 H0 Z" fill="#f0c878"/><path d="M0 9 L4 7 L8 11 L12 7 L18 11 V14 L12 10 L8 15 L4 11 L0 14 Z" fill="#4a7cc4"/><path d="M0 14 L4 11 L8 15 L12 10 L18 14 V17 H0 Z" fill="#e8a860"/></g>
  <g transform="translate(84,0)"><path d="M0.5 0 V17.5 H18 M17.5 0 V17" fill="none" stroke="#8c8c8c"/><rect x="4" y="4" width="4" height="13" fill="#f0c878"/><rect x="10" y="8" width="4" height="9" fill="#b8b8b8"/><path d="M1 13 L6 10 L12 12 L17 7" fill="none" stroke="#e8884a" stroke-width="1.2"/><rect x="16.5" y="0" width="1.2" height="17" fill="#e8884a"/></g>
  <g transform="translate(112,0)"><path d="M0.5 0 V17.5 H18" fill="none" stroke="#8c8c8c"/><rect x="3" y="6" width="3" height="11" fill="#f0c878"/><rect x="6" y="1" width="3" height="16" fill="#8fb4dc"/><rect x="10" y="4" width="3" height="13" fill="#f0c878"/><rect x="13" y="8" width="3" height="9" fill="#8fb4dc"/><path d="M1 11 L6 9 L12 12 L17 8" fill="none" stroke="#e8884a" stroke-width="1.2"/><rect x="16.5" y="0" width="1.2" height="17" fill="#e8884a"/></g>
  <g transform="translate(140,0)"><path d="M0.5 0 V17.5 H18" fill="none" stroke="#8c8c8c"/><rect x="2" y="5" width="4" height="12" fill="#f5dcb8"/><rect x="7" y="3" width="4" height="14" fill="#f0d0a8"/><rect x="12" y="2" width="5" height="15" fill="#f5dcb8"/><path d="M2 10 Q9 5 17 10 V13 Q9 8 2 13 Z" fill="#8fb4dc"/><path d="M2 13 Q9 9 17 13 V17 H2 Z" fill="#e8a060"/><path d="M6 17 Q9 12 12 17" fill="#8fb4dc"/><path d="M4 16 L9 11 L14 16" fill="none" stroke="#a04020" stroke-width=".8"/></g>
 </g>
 <g transform="translate(0,48)">
  <g><path d="M0.5 0 V17.5 H18" fill="none" stroke="#8c8c8c"/><rect x="3" y="3" width="2" height="14" fill="#d8d8d8"/><rect x="5" y="3" width="2" height="6" fill="#e8884a"/><rect x="7" y="8" width="2" height="6" fill="#e8884a"/><rect x="9" y="11" width="2" height="6" fill="#e8884a"/><rect x="11" y="1" width="2" height="13" fill="#6aaa90"/><rect x="13" y="1" width="2" height="16" fill="#d8d8d8"/></g>
  <g transform="translate(28,0)"><path d="M0.5 0 V17.5 H18" fill="none" stroke="#8c8c8c"/><circle cx="4" cy="5" r="1.5" fill="#e8884a"/><circle cx="12" cy="4" r="1.5" fill="#6aaa90"/><circle cx="3" cy="11" r="1.5" fill="#4a7cc4"/><circle cx="9" cy="9" r="1.5" fill="#f0c878"/><circle cx="16" cy="9" r="1.5" fill="#4a7cc4"/><circle cx="13" cy="13" r="1.5" fill="#888"/></g>
  <g transform="translate(56,0)"><circle cx="9" cy="9" r="8.5" fill="#8fb4dc"/><path d="M9 9 L9 0.5 A8.5 8.5 0 0 0 1 6 Z" fill="#f5dcc0" stroke="#333" stroke-width=".7"/><path d="M9 9 L1 6 A8.5 8.5 0 0 0 3 15 Z" fill="#e9c0a8" stroke="#333" stroke-width=".7"/></g>
  <g transform="translate(84,0)"><circle cx="9" cy="9" r="7" fill="none" stroke="#4a7cc4" stroke-width="3.6"/><path d="M3.5 4.5 A7 7 0 0 1 12.5 2.9" fill="none" stroke="#8fb4dc" stroke-width="3.6"/><path d="M13 3.2 A7 7 0 0 1 15.8 7" fill="none" stroke="#f0c878" stroke-width="3.6"/><path d="M9 0 V4 M16 6 L13 7.5 M3 14 L5.5 12 M13 15 L11.5 12.5 M2 6 L5 7" stroke="#404040" stroke-width="0.9"/></g>
  <g transform="translate(112,0)"><rect x="0" y="0" width="18" height="18" fill="#c8c8c8"/><rect x="1" y="1" width="4" height="5" fill="#fff"/><rect x="1" y="7" width="4" height="4" fill="#fff"/><rect x="6" y="1" width="7" height="4.5" fill="#b8d0ec"/><rect x="6" y="6.5" width="7" height="4.5" fill="#b8d0ec"/><rect x="14" y="1" width="3" height="10" fill="#b8d0ec"/><rect x="1" y="12" width="7" height="5" fill="#fff"/><rect x="9" y="12" width="8" height="5" fill="#fff"/></g>
  <g transform="translate(140,0)"><circle cx="9" cy="9" r="8.3" fill="#fff" stroke="#4a7cc4" stroke-width="1.2"/><path d="M1.5 6.5 H16.5 M1.5 11.5 H16.5 M6.5 1.5 Q4.5 9 6.5 16.5 M11.5 1.5 Q13.5 9 11.5 16.5" fill="none" stroke="#6aaa90" stroke-width="0.9"/></g>
 </g>
 <g transform="translate(0,72)">
  <g><path d="M0 0.5 H14 V4 H5 Z" fill="#cfcfcf"/><path d="M0.5 5 H7 V10 H0 Z" fill="#4a7cc4"/><path d="M7.5 5 H15 V10 H8 Z" fill="#cfcfcf"/><path d="M0 10.5 H7 L8 13 V17 H6 Z" fill="#d8d8d8"/><path d="M8.5 10.5 H17 V14 L13 15.5 H9 Z" fill="#8fb4dc"/><path d="M15.5 0 H18 V9 L15.5 10 Z" fill="#f5cf80"/></g>
  <g transform="translate(28,0)"><rect x="0" y="0.5" width="18" height="3" fill="#8fb4dc"/><rect x="2" y="5" width="14" height="3" fill="#f0c878"/><rect x="4" y="9.5" width="10" height="3" fill="#8fb4dc"/><rect x="6" y="14" width="6" height="3" fill="#8fb4dc"/></g>
  <g transform="translate(56,0)"><path d="M2.3 14 A7 7 0 0 1 13.5 6" fill="none" stroke="#f0c878" stroke-width="4"/><path d="M13.5 6 A7 7 0 0 1 16 14" fill="none" stroke="#6aaa90" stroke-width="4"/><path d="M8 12 L13 8" stroke="#333" stroke-width="1.5"/></g>
  <g transform="translate(84,0)"><rect x="0" y="1.5" width="18" height="13" fill="#fff" stroke="#999" stroke-width=".8"/><text x="9" y="10" font-family="Liberation Sans" font-size="8.6" font-weight="bold" text-anchor="middle" fill="#4a7cc4" letter-spacing="-0.3">123</text><rect x="3" y="11.8" width="12" height="1" fill="#555"/></g>
  <g transform="translate(112,0)"><rect x="0" y="0" width="18" height="18" fill="#fff" stroke="#aaa" stroke-width=".6"/><rect x="2" y="2" width="2" height="14" fill="#999"/><rect x="6" y="3" width="6" height="1.5" fill="#4a7cc4"/><rect x="6" y="7" width="4" height="1.5" fill="#4a7cc4"/><rect x="6" y="11" width="5" height="1.5" fill="#4a7cc4"/></g>
  <g transform="translate(140,0)"><rect x="0" y="2" width="18" height="14" fill="#fff" stroke="#aaa" stroke-width=".6"/><path d="M4 9 L7 5 L10 9 Z" fill="#6aaa90"/><path d="M10 5 H16 L13 9 Z" fill="#e0604a"/><rect x="2" y="11" width="14" height="1" fill="#777"/></g>
 </g>
 <g transform="translate(0,96)">
  <g><rect x="0" y="0" width="17" height="18" fill="#fff"/><rect x="0" y="0" width="17" height="3" fill="#4a7cc4"/><rect x="3" y="5" width="3" height="3" fill="#8fb4dc"/><rect x="3" y="9" width="3" height="3" fill="#f0c878"/><rect x="3" y="13" width="3" height="3" fill="#e9b8a0"/><path d="M8 10 H20 V12 L15 16 V19 H13 V16 L8 12 Z" fill="#808080" stroke="#404040" stroke-width=".8"/></g>
  <g transform="translate(28,0)"><rect x="1" y="0" width="16" height="18" fill="#aaa"/><rect x="1" y="0" width="16" height="3" fill="#4a7cc4"/><g fill="#fff"><rect x="2" y="3" width="4" height="4"/><rect x="7" y="3" width="4" height="4"/><rect x="12" y="3" width="4" height="4"/><rect x="2" y="8" width="4" height="4"/><rect x="7" y="8" width="4" height="4"/><rect x="12" y="8" width="4" height="4"/><rect x="2" y="13" width="4" height="4"/><rect x="7" y="13" width="4" height="4"/><rect x="12" y="13" width="4" height="4"/></g></g>
  <g transform="translate(56,0)"><rect x="1" y="0" width="16" height="18" fill="#aaa"/><rect x="1" y="0" width="16" height="3" fill="#4a7cc4"/><g fill="#fff"><rect x="2" y="3" width="4" height="4"/><rect x="7" y="3" width="4" height="4"/><rect x="2" y="8" width="4" height="4"/><rect x="7" y="8" width="4" height="4"/></g><g fill="#d4e2f2"><rect x="12" y="3" width="4" height="4"/><rect x="12" y="8" width="4" height="4"/><rect x="2" y="13" width="4" height="4"/><rect x="7" y="13" width="4" height="4"/><rect x="12" y="13" width="4" height="4"/></g></g>
  <g transform="translate(84,0)"><text x="9" y="18" font-family="Liberation Sans" font-size="21" font-weight="bold" text-anchor="middle" fill="#8fb4dc">R</text></g>
  <g transform="translate(112,0)"><circle cx="9.5" cy="9.5" r="9" fill="#2d78d0"/><path d="M3 6 L6 4 L8 7 L5 9 Z M12 3 L15 5 L14 8 Z M2 12 L5 11 L6 14 Z M14 10 L17 11 L16 14 L13 13 Z M8 12 L11 13 L10 15 Z" fill="#30b040"/><circle cx="9.5" cy="9.5" r="8.6" fill="none" stroke="#aaa" stroke-width="1"/><path d="M1.5 7 Q9.5 3 17.5 7 M1 11.5 Q9.5 8 18 11.5 M3 15.5 Q9.5 12.5 16 15.5 M6.5 1.5 Q3.5 9.5 7 18 M12.5 1.5 Q15.5 9.5 12 18" fill="none" stroke="#b4b4b4" stroke-width="0.8"/></g>
  <g transform="translate(140,0)"><rect x="2" y="8" width="2" height="2" fill="#fff"/><rect x="8" y="8" width="2" height="2" fill="#fff"/><rect x="14" y="8" width="2" height="2" fill="#fff"/></g>
 </g>
</svg>

<!-- vis tabs -->
<svg style="left:1027px;top:350px" width="100" height="22">
 <path d="M0.5 0.5 H18" stroke="#fff" stroke-width="1"/>
 <rect x="0.5" y="4.5" width="19" height="6" fill="none" stroke="#fff" stroke-dasharray="2 1"/>
 <rect x="0.5" y="13.5" width="19" height="6" fill="none" stroke="#fff" stroke-dasharray="2 1"/>
 <rect x="41.5" y="0.5" width="16" height="4" rx="1" fill="none" stroke="#fff"/>
 <path d="M57.5 2.5 H59.5 V8.5 H50.5 V12" fill="none" stroke="#fff"/>
 <rect x="48.5" y="12.5" width="4" height="8" fill="none" stroke="#fff"/>
 <circle cx="88.3" cy="8.3" r="8" fill="none" stroke="#fff" stroke-width="1.1"/>
 <path d="M94 14 L100 20" stroke="#fff" stroke-width="1.2"/>
 <path d="M80.5 10 L84 8 L87 10 L95 4.5" fill="none" stroke="#fff" stroke-width="1.1"/>
 <path d="M83 9.5 V15 M86 9.5 V16 M89 10 V16.5 M92 7.5 V15.5" stroke="#fff" stroke-width="1"/>
</svg>
<div class="a" style="left:1019px;top:376px;width:36px;height:2px;background:#f2c811"></div>
<div class="a" style="left:1181px;top:378px;width:5px;height:127px;border-radius:2.5px;background:#666"></div>

<!-- wells -->
<div class="t" style="left:1019px;top:387px;font-size:12px;color:#9a9a9a">Axis</div>
<div class="a" style="left:1011px;top:406px;width:170px;height:137px;border:1px dashed #636363;border-radius:3px"></div>
<div class="a" style="left:1014px;top:410px;width:164px;height:23px;background:#333;border:1px solid #2a2a2a;border-radius:3px;box-shadow:inset 0 0 0 1px #393939"></div>
<div class="t" style="left:1019px;top:416px;font-size:12px;color:#fff">CategoryID</div>
<svg style="left:1148px;top:419px" width="8" height="5"><path d="M0 0 H8 L4 4 Z" fill="#8a8a8a"/></svg>
<svg style="left:1164px;top:416px" width="10" height="10"><path d="M1 1 L9 9 M9 1 L1 9" stroke="#7c7c7c" stroke-width="1"/></svg>
<div class="a" style="left:1014px;top:435px;width:164px;height:23px;background:#333;border:1px solid #2a2a2a;border-radius:3px;box-shadow:inset 0 0 0 1px #393939"></div>
<div class="t" style="left:1019px;top:441px;font-size:12px;color:#fff">ProductID</div>
<svg style="left:1148px;top:444px" width="8" height="5"><path d="M0 0 H8 L4 4 Z" fill="#8a8a8a"/></svg>
<svg style="left:1164px;top:441px" width="10" height="10"><path d="M1 1 L9 9 M9 1 L1 9" stroke="#7c7c7c" stroke-width="1"/></svg>
<div class="a" style="left:1014px;top:460px;width:164px;height:23px;background:#333;border:1px solid #2a2a2a;border-radius:3px;box-shadow:inset 0 0 0 1px #393939"></div>
<div class="t" style="left:1019px;top:466px;font-size:12px;color:#fff">ProductName</div>
<svg style="left:1148px;top:469px" width="8" height="5"><path d="M0 0 H8 L4 4 Z" fill="#8a8a8a"/></svg>
<svg style="left:1164px;top:466px" width="10" height="10"><path d="M1 1 L9 9 M9 1 L1 9" stroke="#7c7c7c" stroke-width="1"/></svg>
<div class="a" style="left:1014px;top:485px;width:164px;height:23px;background:#333;border:1px solid #2a2a2a;border-radius:3px;box-shadow:inset 0 0 0 1px #393939"></div>
<div class="t" style="left:1019px;top:491px;font-size:12px;color:#fff">QuantityPerUnit</div>
<svg style="left:1148px;top:494px" width="8" height="5"><path d="M0 0 H8 L4 4 Z" fill="#8a8a8a"/></svg>
<svg style="left:1164px;top:491px" width="10" height="10"><path d="M1 1 L9 9 M9 1 L1 9" stroke="#7c7c7c" stroke-width="1"/></svg>
<div class="a" style="left:1014px;top:510px;width:164px;height:23px;background:#333;border:1px solid #2a2a2a;border-radius:3px;box-shadow:inset 0 0 0 1px #393939"></div>
<div class="t" style="left:1019px;top:516px;font-size:12px;color:#fff">SupplierID</div>
<svg style="left:1148px;top:519px" width="8" height="5"><path d="M0 0 H8 L4 4 Z" fill="#8a8a8a"/></svg>
<svg style="left:1164px;top:516px" width="10" height="10"><path d="M1 1 L9 9 M9 1 L1 9" stroke="#7c7c7c" stroke-width="1"/></svg>
<div class="t" style="left:1019px;top:556px;font-size:12px;color:#9a9a9a">Legend</div>
<div class="a" style="left:1012px;top:576px;width:169px;height:29px;border:1px dashed #636363;border-radius:3px"></div>
<div class="a" style="left:1014px;top:579px;width:164px;height:23px;background:#333;border:1px solid #2a2a2a;border-radius:3px;box-shadow:inset 0 0 0 1px #393939"></div>
<div class="t" style="left:1019px;top:585px;font-size:12px;color:#fff">Discontinued</div>
<svg style="left:1148px;top:588px" width="8" height="5"><path d="M0 0 H8 L4 4 Z" fill="#8a8a8a"/></svg>
<svg style="left:1164px;top:585px" width="10" height="10"><path d="M1 1 L9 9 M9 1 L1 9" stroke="#7c7c7c" stroke-width="1"/></svg>
<div class="t" style="left:1019px;top:618px;font-size:12px;color:#9a9a9a">Value</div>
<div class="a" style="left:1012px;top:638px;width:169px;height:29px;border:1px dashed #636363;border-radius:3px"></div>
<div class="a" style="left:1014px;top:641px;width:164px;height:23px;background:#333;border:1px solid #2a2a2a;border-radius:3px;box-shadow:inset 0 0 0 1px #393939"></div>
<div class="t" style="left:1019px;top:647px;font-size:12px;color:#fff">ReorderLevel</div>
<svg style="left:1148px;top:650px" width="8" height="5"><path d="M0 0 H8 L4 4 Z" fill="#8a8a8a"/></svg>
<svg style="left:1164px;top:647px" width="10" height="10"><path d="M1 1 L9 9 M9 1 L1 9" stroke="#7c7c7c" stroke-width="1"/></svg>
<div class="t" style="left:1019px;top:680px;font-size:12px;color:#9a9a9a">Color saturation</div>
<div class="a" style="left:1012px;top:699px;width:169px;height:28px;border:1px dashed #636363;border-radius:3px;background:#4a4a4a"></div>
<div class="t" style="left:1022px;top:708px;font-size:12px;color:#9a9a9a">Drag data fields here</div>
<!-- FIELDS -->
<div class="a" style="left:1187px;top:170px;width:1px;height:570px;background:#151515"></div>
<div class="a" style="left:1188px;top:170px;width:177px;height:48px;background:#222"></div>
<div class="t" style="left:1200px;top:188px;font-size:13.4px;font-weight:bold;color:#fff">Fields</div>
<svg style="left:1345px;top:187px" width="10" height="14"><path d="M2 1.5 L7.5 7 L2 12.5" fill="none" stroke="#ddd" stroke-width="1.3"/></svg>
<div class="a" style="left:1188px;top:218px;width:177px;height:47px;background:#474747"></div>
<div class="a" style="left:1198px;top:225px;width:160px;height:30px;background:#222;border:1px solid #111"></div>
<svg style="left:1209px;top:231px" width="18" height="18"><circle cx="10.5" cy="6.5" r="5" fill="none" stroke="#aaa" stroke-width="1.2"/><path d="M7 10 L1 16" stroke="#aaa" stroke-width="1.2"/></svg>
<div class="t" style="left:1233px;top:234px;font-size:12.5px;color:#b4b4b4">Search</div>
<div class="a" style="left:1188px;top:264px;width:177px;height:2px;background:#1c1c1c"></div>
<div class="a" style="left:1188px;top:266px;width:177px;height:474px;background:#464646"></div>
<div class="a" style="left:1362px;top:336px;width:4px;height:404px;border-radius:2px 0 0 0;background:#676767"></div>
<svg style="left:1199px;top:281px" width="6" height="10"><path d="M0.5 0.5 L5.5 5 L0.5 9.5 Z" fill="#9a9a9a"/></svg>
<svg style="left:1213px;top:280px" width="13" height="12"><rect x="0" y="0" width="13" height="12" fill="#a9a9a9"/><g fill="#fff"><rect x="1" y="3" width="3" height="2"/><rect x="5" y="3" width="3" height="2"/><rect x="9" y="3" width="3" height="2"/><rect x="1" y="6" width="3" height="2"/><rect x="5" y="6" width="3" height="2"/><rect x="9" y="6" width="3" height="2"/><rect x="1" y="9" width="3" height="2"/><rect x="5" y="9" width="3" height="2"/><rect x="9" y="9" width="3" height="2"/></g></svg>
<div class="t" style="left:1238px;top:280px;font-size:12px;color:#fff">Customers</div>
<svg style="left:1199px;top:305px" width="6" height="10"><path d="M0.5 0.5 L5.5 5 L0.5 9.5 Z" fill="#9a9a9a"/></svg>
<svg style="left:1213px;top:304px" width="13" height="12"><rect x="0" y="0" width="13" height="12" fill="#a9a9a9"/><g fill="#fff"><rect x="1" y="3" width="3" height="2"/><rect x="5" y="3" width="3" height="2"/><rect x="9" y="3" width="3" height="2"/><rect x="1" y="6" width="3" height="2"/><rect x="5" y="6" width="3" height="2"/><rect x="9" y="6" width="3" height="2"/><rect x="1" y="9" width="3" height="2"/><rect x="5" y="9" width="3" height="2"/><rect x="9" y="9" width="3" height="2"/></g></svg>
<div class="t" style="left:1238px;top:304px;font-size:12px;color:#fff">Employees</div>
<svg style="left:1199px;top:329px" width="6" height="10"><path d="M0.5 0.5 L5.5 5 L0.5 9.5 Z" fill="#9a9a9a"/></svg>
<svg style="left:1213px;top:328px" width="13" height="12"><rect x="0" y="0" width="13" height="12" fill="#a9a9a9"/><g fill="#fff"><rect x="1" y="3" width="3" height="2"/><rect x="5" y="3" width="3" height="2"/><rect x="9" y="3" width="3" height="2"/><rect x="1" y="6" width="3" height="2"/><rect x="5" y="6" width="3" height="2"/><rect x="9" y="6" width="3" height="2"/><rect x="1" y="9" width="3" height="2"/><rect x="5" y="9" width="3" height="2"/><rect x="9" y="9" width="3" height="2"/></g></svg>
<div class="t" style="left:1238px;top:328px;font-size:12px;color:#fff">EmployeeTerritories</div>
<svg style="left:1199px;top:353px" width="6" height="10"><path d="M0.5 0.5 L5.5 5 L0.5 9.5 Z" fill="#9a9a9a"/></svg>
<svg style="left:1213px;top:352px" width="13" height="12"><rect x="0" y="0" width="13" height="12" fill="#a9a9a9"/><g fill="#fff"><rect x="1" y="3" width="3" height="2"/><rect x="5" y="3" width="3" height="2"/><rect x="9" y="3" width="3" height="2"/><rect x="1" y="6" width="3" height="2"/><rect x="5" y="6" width="3" height="2"/><rect x="9" y="6" width="3" height="2"/><rect x="1" y="9" width="3" height="2"/><rect x="5" y="9" width="3" height="2"/><rect x="9" y="9" width="3" height="2"/></g></svg>
<div class="t" style="left:1238px;top:352px;font-size:12px;color:#fff">Order Details</div>
<svg style="left:1199px;top:377px" width="6" height="10"><path d="M0.5 0.5 L5.5 5 L0.5 9.5 Z" fill="#9a9a9a"/></svg>
<svg style="left:1213px;top:376px" width="13" height="12"><rect x="0" y="0" width="13" height="12" fill="#a9a9a9"/><g fill="#fff"><rect x="1" y="3" width="3" height="2"/><rect x="5" y="3" width="3" height="2"/><rect x="9" y="3" width="3" height="2"/><rect x="1" y="6" width="3" height="2"/><rect x="5" y="6" width="3" height="2"/><rect x="9" y="6" width="3" height="2"/><rect x="1" y="9" width="3" height="2"/><rect x="5" y="9" width="3" height="2"/><rect x="9" y="9" width="3" height="2"/></g></svg>
<div class="t" style="left:1238px;top:376px;font-size:12px;color:#fff">Orders</div>
<svg style="left:1197px;top:402px" width="7" height="7"><path d="M6.5 0.5 V6.5 H0.5 Z" fill="#9a9a9a"/></svg>
<svg style="left:1213px;top:400px" width="13" height="12"><rect x="0" y="0" width="13" height="12" fill="#a9a9a9"/><g fill="#fff"><rect x="1" y="3" width="3" height="2"/><rect x="5" y="3" width="3" height="2"/><rect x="9" y="3" width="3" height="2"/><rect x="1" y="6" width="3" height="2"/><rect x="5" y="6" width="3" height="2"/><rect x="9" y="6" width="3" height="2"/><rect x="1" y="9" width="3" height="2"/><rect x="5" y="9" width="3" height="2"/><rect x="9" y="9" width="3" height="2"/></g></svg>
<div class="t" style="left:1238px;top:400px;font-size:12px;color:#f2c811">Products</div>
<div class="a" style="left:1193px;top:420px;width:168px;height:222px;background:#353535;border-radius:3px"></div>
<div class="a" style="left:1193px;top:421px;width:168px;height:20px;background:#626262;border-radius:4px;border-top:1px solid #6c6c6c"></div>
<svg style="left:1219px;top:426px" width="12" height="12"><rect x="0" y="0" width="12" height="12" fill="#f2c811"/><path d="M2.5 6 L5 8.8 L9.8 3" fill="none" stroke="#222" stroke-width="1.6"/></svg>
<div class="t" style="left:1252px;top:426px;font-size:12px;color:#fff">CategoryID</div>
<div class="a" style="left:1193px;top:443px;width:168px;height:20px;background:#626262;border-radius:4px;border-top:1px solid #6c6c6c"></div>
<svg style="left:1219px;top:448px" width="12" height="12"><rect x="0" y="0" width="12" height="12" fill="#f2c811"/><path d="M2.5 6 L5 8.8 L9.8 3" fill="none" stroke="#222" stroke-width="1.6"/></svg>
<div class="t" style="left:1252px;top:448px;font-size:12px;color:#fff">Discontinued</div>
<div class="a" style="left:1193px;top:465px;width:168px;height:20px;background:#626262;border-radius:4px;border-top:1px solid #6c6c6c"></div>
<svg style="left:1219px;top:470px" width="12" height="12"><rect x="0" y="0" width="12" height="12" fill="#f2c811"/><path d="M2.5 6 L5 8.8 L9.8 3" fill="none" stroke="#222" stroke-width="1.6"/></svg>
<div class="t" style="left:1252px;top:470px;font-size:12px;color:#fff">ProductID</div>
<div class="a" style="left:1193px;top:487px;width:168px;height:20px;background:#626262;border-radius:4px;border-top:1px solid #6c6c6c"></div>
<svg style="left:1219px;top:492px" width="12" height="12"><rect x="0" y="0" width="12" height="12" fill="#f2c811"/><path d="M2.5 6 L5 8.8 L9.8 3" fill="none" stroke="#222" stroke-width="1.6"/></svg>
<div class="t" style="left:1252px;top:492px;font-size:12px;color:#fff">ProductName</div>
<div class="a" style="left:1193px;top:509px;width:168px;height:20px;background:#626262;border-radius:4px;border-top:1px solid #6c6c6c"></div>
<svg style="left:1219px;top:514px" width="12" height="12"><rect x="0" y="0" width="12" height="12" fill="#f2c811"/><path d="M2.5 6 L5 8.8 L9.8 3" fill="none" stroke="#222" stroke-width="1.6"/></svg>
<div class="t" style="left:1252px;top:514px;font-size:12px;color:#fff">QuantityPerUnit</div>
<div class="a" style="left:1193px;top:531px;width:168px;height:20px;background:#626262;border-radius:4px;border-top:1px solid #6c6c6c"></div>
<svg style="left:1219px;top:536px" width="12" height="12"><rect x="0" y="0" width="12" height="12" fill="#f2c811"/><path d="M2.5 6 L5 8.8 L9.8 3" fill="none" stroke="#222" stroke-width="1.6"/></svg>
<svg style="left:1236px;top:537px" width="10" height="10"><path d="M9 1.5 V0.5 H0.8 L4.8 5 L0.8 9.5 H9 V8.5" fill="none" stroke="#a6a6a6" stroke-width="1"/></svg>
<div class="t" style="left:1252px;top:536px;font-size:12px;color:#fff">ReorderLevel</div>
<div class="a" style="left:1193px;top:553px;width:168px;height:20px;background:#626262;border-radius:4px;border-top:1px solid #6c6c6c"></div>
<svg style="left:1219px;top:558px" width="12" height="12"><rect x="0" y="0" width="12" height="12" fill="#f2c811"/><path d="M2.5 6 L5 8.8 L9.8 3" fill="none" stroke="#222" stroke-width="1.6"/></svg>
<div class="t" style="left:1252px;top:558px;font-size:12px;color:#fff">SupplierID</div>
<div class="a" style="left:1193px;top:575px;width:168px;height:20px;background:#626262;border-radius:4px;border-top:1px solid #6c6c6c"></div>
<svg style="left:1219px;top:580px" width="12" height="12"><rect x="0" y="0" width="12" height="12" fill="#f2c811"/><path d="M2.5 6 L5 8.8 L9.8 3" fill="none" stroke="#222" stroke-width="1.6"/></svg>
<svg style="left:1236px;top:581px" width="10" height="10"><path d="M9 1.5 V0.5 H0.8 L4.8 5 L0.8 9.5 H9 V8.5" fill="none" stroke="#a6a6a6" stroke-width="1"/></svg>
<div class="t" style="left:1252px;top:580px;font-size:12px;color:#fff">UnitPrice</div>
<div class="a" style="left:1193px;top:597px;width:168px;height:20px;background:#626262;border-radius:4px;border-top:1px solid #6c6c6c"></div>
<svg style="left:1219px;top:602px" width="12" height="12"><rect x="0" y="0" width="12" height="12" fill="#f2c811"/><path d="M2.5 6 L5 8.8 L9.8 3" fill="none" stroke="#222" stroke-width="1.6"/></svg>
<svg style="left:1236px;top:603px" width="10" height="10"><path d="M9 1.5 V0.5 H0.8 L4.8 5 L0.8 9.5 H9 V8.5" fill="none" stroke="#a6a6a6" stroke-width="1"/></svg>
<div class="t" style="left:1252px;top:602px;font-size:12px;color:#fff">UnitsInStock</div>
<div class="a" style="left:1193px;top:619px;width:168px;height:20px;background:#626262;border-radius:4px;border-top:1px solid #6c6c6c"></div>
<svg style="left:1219px;top:624px" width="12" height="12"><rect x="0" y="0" width="12" height="12" fill="#f2c811"/><path d="M2.5 6 L5 8.8 L9.8 3" fill="none" stroke="#222" stroke-width="1.6"/></svg>
<svg style="left:1236px;top:625px" width="10" height="10"><path d="M9 1.5 V0.5 H0.8 L4.8 5 L0.8 9.5 H9 V8.5" fill="none" stroke="#a6a6a6" stroke-width="1"/></svg>
<div class="t" style="left:1252px;top:624px;font-size:12px;color:#fff">UnitsOnOrder</div>
<svg style="left:1199px;top:652px" width="6" height="10"><path d="M0.5 0.5 L5.5 5 L0.5 9.5 Z" fill="#9a9a9a"/></svg>
<svg style="left:1213px;top:651px" width="13" height="12"><rect x="0" y="0" width="13" height="12" fill="#a9a9a9"/><g fill="#fff"><rect x="1" y="3" width="3" height="2"/><rect x="5" y="3" width="3" height="2"/><rect x="9" y="3" width="3" height="2"/><rect x="1" y="6" width="3" height="2"/><rect x="5" y="6" width="3" height="2"/><rect x="9" y="6" width="3" height="2"/><rect x="1" y="9" width="3" height="2"/><rect x="5" y="9" width="3" height="2"/><rect x="9" y="9" width="3" height="2"/></g></svg>
<div class="t" style="left:1238px;top:651px;font-size:12px;color:#fff">Region</div>
<svg style="left:1199px;top:676px" width="6" height="10"><path d="M0.5 0.5 L5.5 5 L0.5 9.5 Z" fill="#9a9a9a"/></svg>
<svg style="left:1213px;top:675px" width="13" height="12"><rect x="0" y="0" width="13" height="12" fill="#a9a9a9"/><g fill="#fff"><rect x="1" y="3" width="3" height="2"/><rect x="5" y="3" width="3" height="2"/><rect x="9" y="3" width="3" height="2"/><rect x="1" y="6" width="3" height="2"/><rect x="5" y="6" width="3" height="2"/><rect x="9" y="6" width="3" height="2"/><rect x="1" y="9" width="3" height="2"/><rect x="5" y="9" width="3" height="2"/><rect x="9" y="9" width="3" height="2"/></g></svg>
<div class="t" style="left:1238px;top:675px;font-size:12px;color:#fff">Shippers</div>
<svg style="left:1199px;top:700px" width="6" height="10"><path d="M0.5 0.5 L5.5 5 L0.5 9.5 Z" fill="#9a9a9a"/></svg>
<svg style="left:1213px;top:699px" width="13" height="12"><rect x="0" y="0" width="13" height="12" fill="#a9a9a9"/><g fill="#fff"><rect x="1" y="3" width="3" height="2"/><rect x="5" y="3" width="3" height="2"/><rect x="9" y="3" width="3" height="2"/><rect x="1" y="6" width="3" height="2"/><rect x="5" y="6" width="3" height="2"/><rect x="9" y="6" width="3" height="2"/><rect x="1" y="9" width="3" height="2"/><rect x="5" y="9" width="3" height="2"/><rect x="9" y="9" width="3" height="2"/></g></svg>
<div class="t" style="left:1238px;top:699px;font-size:12px;color:#fff">Suppliers</div>
<svg style="left:1199px;top:724px" width="6" height="10"><path d="M0.5 0.5 L5.5 5 L0.5 9.5 Z" fill="#9a9a9a"/></svg>
<svg style="left:1213px;top:723px" width="13" height="12"><rect x="0" y="0" width="13" height="12" fill="#a9a9a9"/><g fill="#fff"><rect x="1" y="3" width="3" height="2"/><rect x="5" y="3" width="3" height="2"/><rect x="9" y="3" width="3" height="2"/><rect x="1" y="6" width="3" height="2"/><rect x="5" y="6" width="3" height="2"/><rect x="9" y="6" width="3" height="2"/><rect x="1" y="9" width="3" height="2"/><rect x="5" y="9" width="3" height="2"/><rect x="9" y="9" width="3" height="2"/></g></svg>
<div class="t" style="left:1238px;top:723px;font-size:12px;color:#fff">Territories</div>
<!-- STATUS -->
<div class="a" style="left:0;top:740px;width:1365px;height:27px;background:#333"></div>
<div class="t" style="left:5px;top:746px;font-family:'Liberation Serif',serif;font-size:14px;color:#fff">PAGE 1 OF 1</div>
<div class="t" style="left:1000px;top:745px;width:1356px;text-align:right;font-family:'Liberation Serif',serif;font-size:13.7px;color:#fff;left:0">DirectQuery: Enabled (click to change)</div></body></html>
